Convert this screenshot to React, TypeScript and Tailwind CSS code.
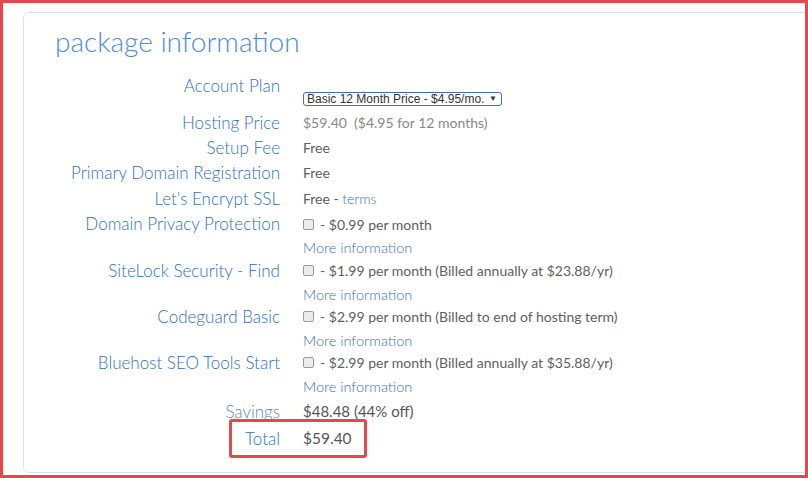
const LABEL = 'text-[#2f71c4] text-[17px] font-light';
const VALUE = 'text-[#606060] text-[14px]';
const LINK = 'text-[#3a72c0] font-light';

function Checkbox() {
  return (
    <span className="inline-block w-[11px] h-[11px] rounded-[2px] border border-[#9a9a9a] bg-[#ececec] mr-[6px] align-[-1px]" />
  );
}

function Row({ label, children, h = 'h-[25px]' }: { label: string; children: React.ReactNode; h?: string }) {
  return (
    <div className={`flex ${h} items-center`}>
      <div className={`w-[256px] text-right ${LABEL}`}>{label}</div>
      <div className={`ml-[23px] ${VALUE}`}>{children}</div>
    </div>
  );
}

function AddOn({ label, price }: { label: string; price: string }) {
  return (
    <div className="flex">
      <div className={`w-[256px] h-[24px] flex items-center justify-end ${LABEL}`}>{label}</div>
      <div className="ml-[23px] flex flex-col">
        <div className={`h-[24px] flex items-center ${VALUE}`}>
          <Checkbox />
          <span>- {price}</span>
        </div>
        <div className={`h-[22.3px] pt-[2px] flex items-center text-[14.5px] ${LINK}`}>More information</div>
      </div>
    </div>
  );
}

export default function App() {
  return (
    <div className="w-[808px] h-[478px] overflow-hidden bg-white border-[3px] border-[#e5474b] font-['Lato',sans-serif] text-[16px]">
      <div className="ml-[20px] mt-[9px] w-[820px] h-[461px] border border-[#d4e6f6] rounded-[6px] pt-[10px]">
        <h1 className="pl-[31px] h-[36px] leading-[36px] text-[28px] font-light text-[#4a8ddc]">package information</h1>

        <div className="mt-[15px]">
          <div className="flex h-[36px]">
            <div className={`w-[256px] h-[24px] flex items-center justify-end ${LABEL}`}>Account Plan</div>
            <div className="ml-[23px] pt-[18px]">
              <div className="w-[199px] h-[14px] border border-[#3d6fb4] rounded-[3px] flex items-center justify-between pl-[3px] pr-[4px] font-['Liberation_Sans',sans-serif] text-[12px] text-[#333] leading-none">
                <span>Basic 12 Month Price - $4.95/mo.</span>
                <span className="text-[8px]">▼</span>
              </div>
            </div>
          </div>

          <Row label="Hosting Price">
            <span className="text-[#888]">$59.40&nbsp;&nbsp;($4.95 for 12 months)</span>
          </Row>
          <Row label="Setup Fee">Free</Row>
          <Row label="Primary Domain Registration">Free</Row>
          <Row label="Let's Encrypt SSL" h="h-[27px]">
            Free - <span className={LINK}>terms</span>
          </Row>

          <AddOn label="Domain Privacy Protection" price="$0.99 per month" />
          <AddOn label="SiteLock Security - Find" price="$1.99 per month (Billed annually at $23.88/yr)" />
          <AddOn label="Codeguard Basic" price="$2.99 per month (Billed to end of hosting term)" />
          <AddOn label="Bluehost SEO Tools Start" price="$2.99 per month (Billed annually at $35.88/yr)" />

          <div className="flex h-[25px] items-center mt-[2px]">
            <div className="w-[256px] text-right text-[17px] font-light text-[#5f88c2]">Savings</div>
            <div className="ml-[23px] text-[15px] text-[#555]">$48.48 (44% off)</div>
          </div>

          <div className="flex">
            <div className="ml-[205px] mt-[-5px] w-[138px] h-[39px] border-[3px] border-[#e5474b] rounded-[3px] flex items-center">
              <div className={`w-[48px] text-right ${LABEL}`}>Total</div>
              <div className="ml-[23px] text-[15.5px] text-[#555]">$59.40</div>
            </div>
          </div>
        </div>
      </div>
    </div>
  );
}
